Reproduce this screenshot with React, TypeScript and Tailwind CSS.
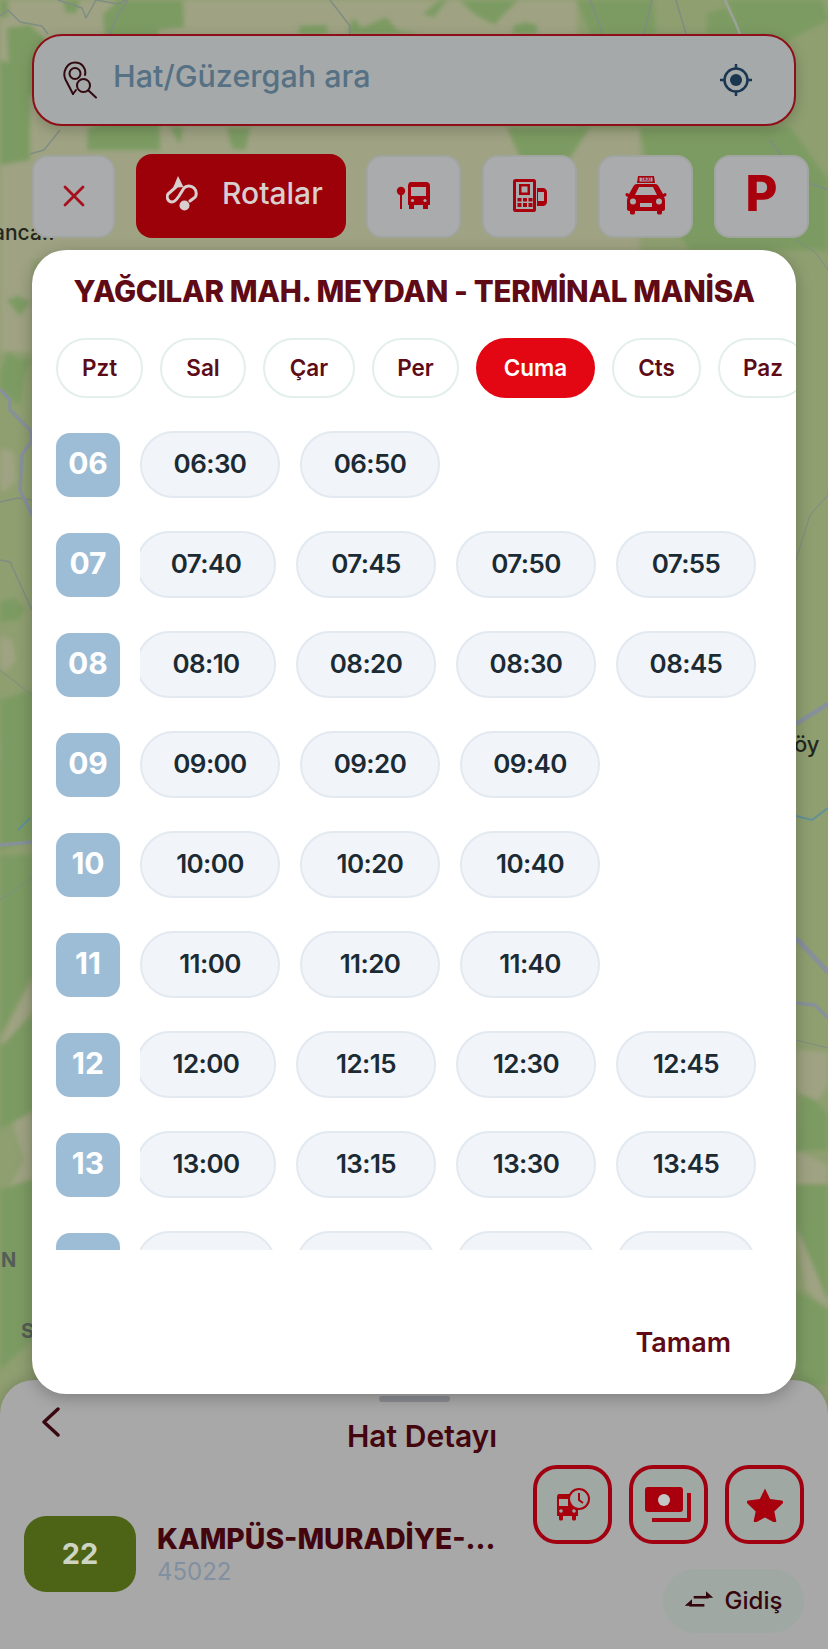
const hourRows = [
  { hour: '06', shift: false, times: ['06:30', '06:50'] },
  { hour: '07', shift: true, times: ['07:40', '07:45', '07:50', '07:55'] },
  { hour: '08', shift: true, times: ['08:10', '08:20', '08:30', '08:45'] },
  { hour: '09', shift: false, times: ['09:00', '09:20', '09:40'] },
  { hour: '10', shift: false, times: ['10:00', '10:20', '10:40'] },
  { hour: '11', shift: false, times: ['11:00', '11:20', '11:40'] },
  { hour: '12', shift: true, times: ['12:00', '12:15', '12:30', '12:45'] },
  { hour: '13', shift: true, times: ['13:00', '13:15', '13:30', '13:45'] },
  { hour: '', shift: true, times: ['', '', '', ''] },
];

const days = [
  { label: 'Pzt', width: 'w-[87px]' },
  { label: 'Sal', width: 'w-[86px]' },
  { label: 'Çar', width: 'w-[92px]' },
  { label: 'Per', width: 'w-[87px]' },
  { label: 'Cuma', width: 'w-[119px]', active: true },
  { label: 'Cts', width: 'w-[89px]' },
  { label: 'Paz', width: 'w-[90px]' },
];

const MapBackground = () => (
  <svg className="absolute inset-0" width="828" height="1649" viewBox="0 0 828 1649">
    <rect width="828" height="1649" fill="#8f9f70" />
    <g fill="#9fa383" className="blur-[2.5px]">
      <path d="M0 0H577V130H640V260H0Z" />
      <path d="M0 260H32V352H0Z" />
      <path d="M0 448L14 452 16 480 4 492 0 490Z" />
      <path d="M0 636L12 640 16 660 6 672 0 668Z" />
      <path d="M0 735L6 745 5 760 0 762Z" />
      <path d="M0 1040L32 978V1010L8 1045Z" />
      <path d="M12 1120L32 1112V1180L8 1190 24 1160Z" />
      <path d="M796 1050L828 1052V1085L815 1105 796 1090Z" />
      <path d="M796 1150L828 1165V1185H796Z" />
      <path d="M796 1230L812 1240 828 1300V1310L806 1290Z" />
      <path d="M796 1350L806 1365 800 1380H796Z" />
    </g>
    <g fill="#7c9b62" className="blur-[2px]">
      <path d="M0 0H8V16L0 18Z" />
      <path d="M7 28L30 25 43 37 60 60 50 100 10 90Z" />
      <path d="M63 0H80L76 13H66Z" />
      <path d="M103 14L116 3 113 0H183L184 27 158 30 160 150 87 150 88 128 113 120Z" />
      <path d="M300 26L326 25 328 34 298 34Z" />
      <path d="M347 34L353 18 362 28 386 17 397 30 420 34Z" />
      <path d="M423 14L440 0H447L434 17Z" />
      <path d="M460 0H518L500 18 495 25 474 14Z" />
      <path d="M513 26L525 22 537 25V34H513Z" />
      <path d="M577 0H653L656 34H590Z" />
      <path d="M707 14L725 8 737 25 745 34H707Z" />
      <path d="M727 0H822L828 20 808 30 780 45 740 34Z" />
      <path d="M170 127L183 127 180 145Z" />
      <path d="M227 128L250 128 245 150 232 148Z" />
      <path d="M507 127H590L570 158 520 158Z" />
      <path d="M0 60L30 70 30 160 0 165Z" />
      <path d="M640 127L790 127 828 180V250H690L655 200Z" />
      <path d="M7 300L18 296 30 302 20 316Z" />
      <path d="M0 372L8 352 20 360 32 358 24 378 20 405 6 396 0 388Z" />
      <path d="M0 602L14 598 25 608 18 620 0 622Z" />
      <path d="M0 700L32 690V840L0 850Z" />
      <path d="M0 855H32V975L0 1035Z" />
      <path d="M0 1048L32 1015V1110L0 1130Z" />
      <path d="M0 1190L32 1180V1340L0 1370Z" />
      <path d="M800 1095L815 1100 828 1115V1150L796 1150Z" />
      <path d="M796 1185H828V1300L796 1225Z" />
      <path d="M796 1290L828 1310V1385H796Z" />
    </g>
    <g fill="none" stroke="#7f8d83" strokeLinejoin="round" className="blur-[0.5px]">
      <path d="M0 16L8 10 20 22 42 26 48 34" strokeWidth="1.5" />
      <path d="M58 0L82 8 86 18 96 0 118 4 126 0" strokeWidth="1.5" />
      <path d="M110 34L116 18 128 0" strokeWidth="1.5" />
      <path d="M330 0L350 26V34" strokeWidth="1.5" />
      <path d="M590 0L600 26 602 34" strokeWidth="1.5" />
      <path d="M652 0L644 34M676 0L686 34" strokeWidth="1.5" />
      <path d="M725 0L736 24 740 34" strokeWidth="2.5" stroke="#9aa39a" />
      <path d="M60 130L44 150 30 154M770 140L800 180 828 190" strokeWidth="1.5" />
      <path d="M0 502L18 498 32 500M0 560L10 562 32 610" strokeWidth="1.5" />
      <path d="M0 670L32 695" strokeWidth="1" />
      <path d="M0 900L32 878" strokeWidth="1" />
      <path d="M796 240L815 252 828 270" strokeWidth="1" />
      <path d="M796 560L810 515 828 495" strokeWidth="1" />
      <path d="M796 1040L828 1048" strokeWidth="1" />
    </g>
    <g fill="none" stroke="#87919a" strokeWidth="3.5" strokeLinejoin="round" className="blur-[0.5px]">
      <path d="M0 389L10 400V410L30 430 32 440 22 455 20 490 32 515" />
      <path d="M0 845L32 842" />
      <path d="M796 938L828 972" strokeWidth="5" />
      <path d="M796 1003L815 1005 828 1018" />
      <path d="M796 724L828 704" strokeWidth="5" />
    </g>
    <g fill="none" stroke="#62919a" strokeWidth="2">
      <path d="M18 830L30 818M796 816L812 820 828 808" />
    </g>
    <g fontFamily="Inter, sans-serif" fontWeight="500" fill="#23261f">
      <text x="-7" y="240" fontSize="21">anca..</text>
      <text x="794" y="752" fontSize="22">öy</text>
      <text x="1" y="1267" fontSize="20" fontWeight="700" fill="#565c56">N</text>
      <text x="21" y="1338" fontSize="20" fontWeight="700" fill="#565c56">S</text>
    </g>
  </svg>
);

const PinSearchIcon = () => (
  <svg width="36" height="38" viewBox="0 0 36 38" fill="none" stroke="#300a10" strokeWidth="2">
    <path d="M11 33L3.500 18.500C0 11 5 1.500 13 1.500c7 0 11.500 6 10 12.500" strokeLinecap="round" />
    <circle cx="13" cy="12.500" r="5.500" />
    <circle cx="21.500" cy="24.500" r="6.500" />
    <path d="M11 33l3-4M26.500 29.500L34 36.500" strokeLinecap="round" />
  </svg>
);

const LocateIcon = () => (
  <svg width="36" height="36" viewBox="0 0 36 36" fill="none" stroke="#193750" strokeWidth="2.500">
    <circle cx="18" cy="18" r="11.500" />
    <circle cx="18" cy="18" r="6" fill="#193750" stroke="none" />
    <path d="M18 2v5M18 29v5M2 18h5M29 18h5" />
  </svg>
);

const CloseIcon = () => (
  <svg width="22" height="22" viewBox="0 0 22 22" stroke="#a80f1c" strokeWidth="2.800" strokeLinecap="round">
    <path d="M2 2l18 18M20 2L2 20" />
  </svg>
);

const RouteIcon = () => (
  <svg width="33" height="35" viewBox="0 0 33 35" fill="none">
    <path d="M12 0l5.500 11-10.500 1z" fill="#d9cfcf" />
    <path
      d="M10 11L2 18C0 21 2 26 6 26C9 26 11 23 13 20L18 12C20 9.500 25 9 28 12C31 15 31 20 28 22L24 25"
      stroke="#d9cfcf"
      strokeWidth="3"
      strokeLinecap="round"
    />
    <circle cx="18.500" cy="29.500" r="5" fill="#d9cfcf" />
  </svg>
);

const BusStopIcon = () => (
  <svg width="36" height="28" viewBox="0 0 36 28" fill="#a8000c">
    <circle cx="5" cy="9" r="4.200" />
    <rect x="4" y="10" width="2" height="17" />
    <path d="M15 0h15c3 0 4 2 4 4v19h-2v4h-5v-4H18v4h-5v-4h-1V4c0-2 1-4 3-4z" />
    <path d="M15 5h15v9H15z" fill="#a9abad" />
    <circle cx="16.500" cy="18.500" r="1.600" fill="#a9abad" />
    <circle cx="29" cy="18.500" r="1.600" fill="#a9abad" />
  </svg>
);

const PosIcon = () => (
  <svg width="34" height="34" viewBox="0 0 34 34" fill="#a8000c">
    <path d="M24 9h6c2 0 4 2 4 4v10c0 2-2 4-4 4h-6z" />
    <path d="M25 13h6v9h-6z" fill="#a9abad" />
    <rect x="0" y="0" width="23" height="33" rx="2.500" />
    <rect x="3" y="3" width="17" height="27" fill="#a9abad" />
    <rect x="6" y="5" width="11" height="11" />
    <rect x="8.500" y="7.500" width="6" height="6" fill="#a9abad" />
    <path d="M4.500 19h4v3.500h-4zM10 19h4v3.500h-4zM15.500 19h4v3.500h-4zM4.500 24h4v4h-4zM10 24h4v4h-4zM15.500 24h4v4h-4z" />
  </svg>
);

const TaxiIcon = () => (
  <svg width="42" height="40" viewBox="0 0 42 40" fill="#a8000c">
    <path d="M13 0h16l1 7H12z" />
    <path d="M14.500 1.500h13v4h-13z" fill="#a9abad" />
    <text x="21" y="5.200" fontSize="4.200" fontWeight="700" textAnchor="middle" fontFamily="Inter, sans-serif">TAXI</text>
    <path d="M12 8h18c2 0 3 1 4 3l4 7 2-1c1.500 0 2 2 1 3l-2 1c1 2 1 3 1 5v7c0 1-1 2-2 2h-1v2c0 2-5 2-5 0v-2H10v2c0 2-5 2-5 0v-2H4c-1 0-2-1-2-2v-7c0-2 0-3 1-5l-2-1c-1-1-.500-3 1-3l2 1 4-7c1-2 2-3 4-3z" />
    <path d="M14 11h14l4 8H10z" fill="#a9abad" />
    <circle cx="8" cy="25.500" r="3" fill="#a9abad" />
    <circle cx="34" cy="25.500" r="3" fill="#a9abad" />
    <rect x="15" y="27" width="12" height="4" fill="#a9abad" />
  </svg>
);

const BusClockIcon = () => (
  <svg width="34" height="34" viewBox="0 0 34 34">
    <path
      d="M3 6h16c2 0 3 1 3 3v19h-2v3c0 2-4 2-4 0v-3H7v3c0 2-4 2-4 0v-3H1V9c0-2 1-3 2-3z"
      fill="#a8000c"
    />
    <path d="M3 11h9v7H3z" fill="#9fa8a3" />
    <circle cx="5" cy="23" r="1.800" fill="#9fa8a3" />
    <circle cx="18" cy="23" r="1.800" fill="#9fa8a3" />
    <circle cx="23" cy="11" r="10" fill="#9fa8a3" stroke="#a8000c" strokeWidth="2" />
    <path d="M23 5v7l4 3" fill="none" stroke="#a8000c" strokeWidth="2" />
  </svg>
);

const MoneyIcon = () => (
  <svg width="48" height="35" viewBox="0 0 48 35" fill="#a8000c">
    <rect x="0" y="0" width="38" height="25" rx="3" />
    <circle cx="19" cy="13" r="6" fill="#c3c8c4" />
    <path d="M42 6h4v27c0 1-1 2-2 2H7v-4h35z" />
  </svg>
);

const StarIcon = () => (
  <svg width="36" height="35" viewBox="0 0 24 23" fill="#a8000c">
    <path d="M12 .800l3.400 7 7.700 1.100c1 .200 1.300 1.200.600 1.900l-5.500 5.300 1.300 6.200c.200 1-.700 1.500-1.500 1.100L12 20.100l-6 3.300c-.800.400-1.700-.100-1.500-1.100l1.300-6.200L.300 10.800c-.700-.700-.400-1.700.600-1.900l7.700-1.100z" />
  </svg>
);

const SwapIcon = () => (
  <svg width="28" height="22" viewBox="0 0 26 20" fill="none" stroke="#35060d" strokeWidth="2.400">
    <path d="M8 6.500h14" />
    <path d="M20 2l5 4.500-5 0z" fill="#35060d" strokeWidth="1" />
    <path d="M4 14h14" />
    <path d="M6 9.500L1 14l5 0z" fill="#35060d" strokeWidth="1" />
  </svg>
);

const quickChips = [
  { key: 'stop', icon: <BusStopIcon /> },
  { key: 'pos', icon: <PosIcon /> },
  { key: 'taxi', icon: <TaxiIcon /> },
];

export default function App() {
  return (
    <div className="relative h-[1649px] w-[828px] overflow-hidden font-['Inter',sans-serif]">
      <MapBackground />

      <div className="relative pl-[32px] pt-[34px]">
        <div className="flex h-[92px] w-[764px] items-center rounded-[30px] border-2 border-[#8e0f17] bg-[#a5a9a9] pl-[28px] pr-[40px] shadow-[0_4px_14px_rgba(0,0,0,0.2)]">
          <PinSearchIcon />
          <span className="ml-[15px] flex-1 pb-[8px] text-[30.5px] font-medium text-[#567084]">Hat/Güzergah ara</span>
          <LocateIcon />
        </div>

        <div className="mt-[28px] flex h-[84px] items-center">
          <button className="flex h-[83px] w-[83px] items-center justify-center rounded-[16px] border-2 border-[#a0a5a0] bg-[#a9abad]">
            <CloseIcon />
          </button>
          <button className="ml-[21px] flex h-[84px] w-[210px] items-center gap-[23px] rounded-[16px] bg-[#9c0009] pb-[6px] pl-[30px] text-[30px] font-medium text-[#d9cfcf]">
            <RouteIcon />
            Rotalar
          </button>
          <div className="ml-[20px] flex gap-[21px]">
            {quickChips.map((chip) => (
              <button
                key={chip.key}
                className="flex h-[83px] w-[95px] items-center justify-center rounded-[16px] border-2 border-[#a0a5a0] bg-[#a9abad]"
              >
                {chip.icon}
              </button>
            ))}
            <button className="flex h-[83px] w-[95px] items-center justify-center rounded-[16px] border-2 border-[#a0a5a0] bg-[#a9abad] pb-[4px] text-[49px] font-extrabold text-[#a8000c]">
              P
            </button>
          </div>
        </div>
      </div>

      <div className="absolute bottom-0 left-0 h-[269px] w-[828px] rounded-t-[34px] bg-[#a8a8a8] shadow-[0_-2px_12px_rgba(0,0,0,0.15)]">
        <div className="mx-auto mt-[16px] h-[6px] w-[71px] rounded-full bg-[#8a8b91]" />
        <div className="flex pl-[41px] pt-[5px]">
          <svg width="20" height="30" viewBox="0 0 20 30" fill="none" stroke="#3a0810" strokeWidth="3.400" strokeLinecap="round" strokeLinejoin="round">
            <path d="M17 2L3 15l14 13" />
          </svg>
          <span className="ml-[286px] mt-[9px] text-[30px] font-semibold leading-[40px] text-[#43060f]">Hat Detayı</span>
        </div>
        <div className="flex justify-between px-[24px]">
          <div className="mt-[60px] flex items-center self-start">
            <div className="flex h-[76px] w-[112px] items-center justify-center rounded-[22px] bg-[#4d6417] text-[29px] font-bold text-[#cdd5c2]">
              22
            </div>
            <div className="ml-[21px] mb-[2px]">
              <div className="text-[28.3px] font-extrabold leading-[38px] text-[#43060f]">KAMPÜS-MURADİYE-...</div>
              <div className="text-[24px] leading-[28px] text-[#8090a0]">45022</div>
            </div>
          </div>
          <div className="mt-[9px] flex flex-col items-end">
            <div className="flex gap-[17px]">
              <button className="flex h-[79px] w-[79px] items-center justify-center rounded-[24px] border-4 border-[#a00010] bg-[#9fa8a3]">
                <BusClockIcon />
              </button>
              <button className="flex h-[79px] w-[79px] items-center justify-center rounded-[24px] border-4 border-[#a00010] bg-[#9fa8a3]">
                <MoneyIcon />
              </button>
              <button className="flex h-[79px] w-[79px] items-center justify-center rounded-[24px] border-4 border-[#a00010] bg-[#9fa8a3]">
                <StarIcon />
              </button>
            </div>
            <div className="mt-[25px] flex h-[64px] w-[141px] items-center justify-center gap-[12px] rounded-full bg-[#a0a8a3] text-[24px] font-medium text-[#35060d]">
              <SwapIcon />
              Gidiş
            </div>
          </div>
        </div>
      </div>

      <div className="absolute left-[32px] top-[250px] flex h-[1144px] w-[764px] flex-col rounded-[34px] bg-white shadow-[0_4px_16px_rgba(0,0,0,0.25)]">
        <h2 className="pt-[22px] text-center text-[29.5px] font-extrabold leading-[38px] tracking-[-0.3px] text-[#5f0a14]">
          YAĞCILAR MAH. MEYDAN - TERMİNAL MANİSA
        </h2>

        <div className="mt-[28px] flex gap-[17px] overflow-hidden pl-[24px]">
          {days.map((day) => (
            <div
              key={day.label}
              className={`flex h-[60px] shrink-0 items-center justify-center rounded-full border-2 text-[22.5px] font-semibold ${day.width} ${
                day.active ? 'border-[#e30613] bg-[#e30613] text-white' : 'border-[#e3efec] bg-white text-[#5d0b16]'
              }`}
            >
              {day.label}
            </div>
          ))}
        </div>

        <div className="mt-[33px] flex h-[819px] flex-col gap-[33px] overflow-hidden pl-[24px]">
          {hourRows.map((row, rowIndex) => (
            <div key={rowIndex} className="flex h-[67px] shrink-0 items-center">
              <div className="flex h-[64px] w-[64px] shrink-0 items-center justify-center rounded-[14px] bg-[#9dbdd6] pb-[3px] text-[30px] font-bold text-white">
                {row.hour}
              </div>
              <div className="ml-[20px] flex-1 overflow-hidden">
                <div className={`flex gap-[20px] ${row.shift ? '-ml-[4px]' : ''}`}>
                  {row.times.map((time, timeIndex) => (
                    <div
                      key={timeIndex}
                      className="flex h-[67px] w-[140px] shrink-0 items-center justify-center rounded-[34px] border-2 border-[#e2e9f0] bg-[#f1f5f9] pb-[2px] text-[26px] font-semibold tracking-[-0.6px] text-[#1c2b33]"
                    >
                      {time}
                    </div>
                  ))}
                </div>
              </div>
            </div>
          ))}
        </div>

        <div className="mt-[74px] pr-[65px] text-right text-[27px] font-semibold leading-[38px] text-[#5f0a14]">Tamam</div>
      </div>
    </div>
  );
}
